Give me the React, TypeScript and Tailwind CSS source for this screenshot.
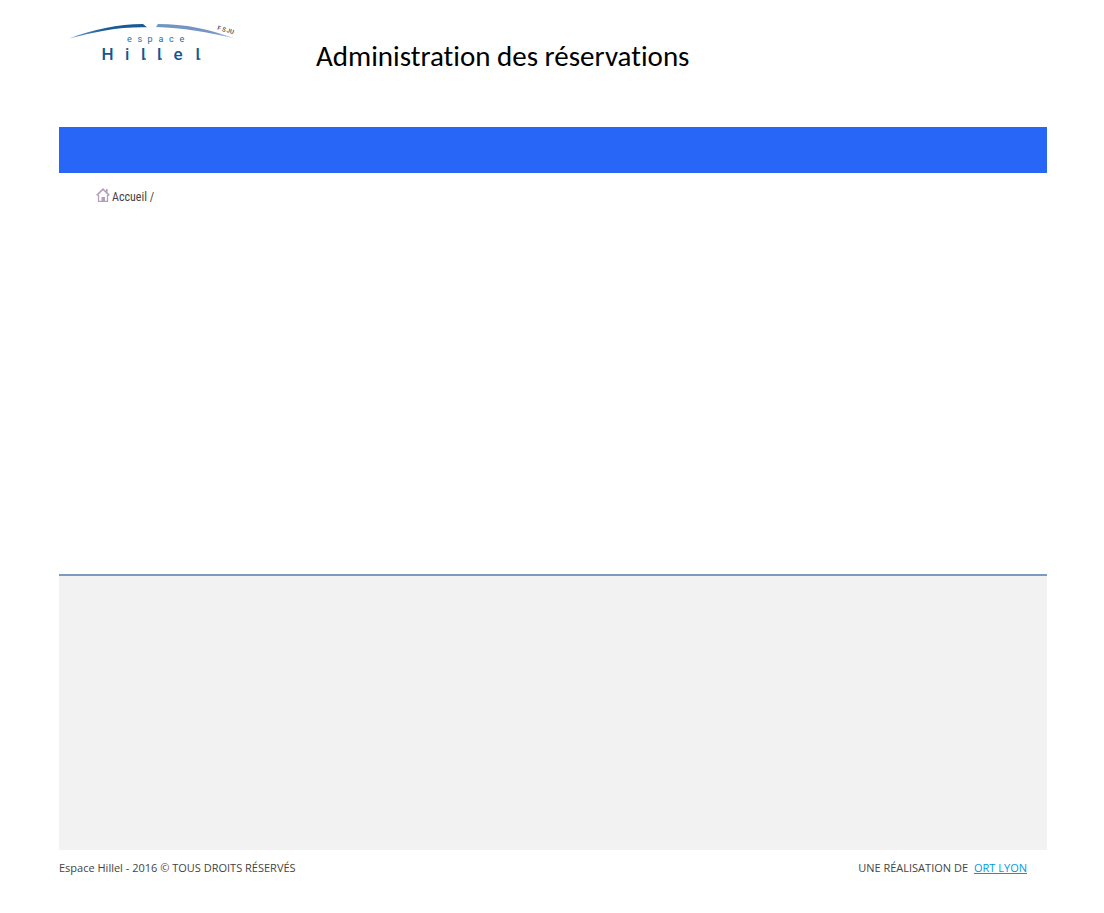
import React from "react";

function Logo() {
  return (
    <svg viewBox="0 0 180 48" className="h-12 w-[180px] shrink-0" role="img" aria-label="Espace Hillel FSJU">
      <defs>
        <linearGradient id="leftArc" x1="0" x2="1" y1="0" y2="0">
          <stop offset="0" stopColor="#5d93c4" />
          <stop offset="0.5" stopColor="#175a94" />
          <stop offset="1" stopColor="#175a94" />
        </linearGradient>
        <linearGradient id="rightArc" x1="0" x2="1" y1="0" y2="0">
          <stop offset="0" stopColor="#6f95c2" />
          <stop offset="0.7" stopColor="#7694c2" />
          <stop offset="1" stopColor="#b3c9e2" />
        </linearGradient>
      </defs>
      <path d="M10 18.5C34 9.500 59 4 84 4L88 7.200C61 6.500 36 11.500 10 18.500Z" fill="url(#leftArc)" />
      <path d="M99 4C126 4 150 9 176 18.500C149 12.500 124 7.500 97 7Z" fill="url(#rightArc)" />
      <text x="68 78.500 88.500 99.500 110 120.500" y="22" fontSize="9" fill="#2767a3" fontFamily="Roboto, sans-serif">espace</text>
      <text x="42.500 66 82 98 114.500 136.500" y="40" fontSize="17" fontWeight="500" fill="#125893" fontFamily="Roboto, sans-serif">Hillel</text>
      <path d="M84.700 37.500q0 1.800 2.300 1.700M100.700 37.500q0 1.800 2.300 1.700M139.200 37.500q0 1.800 2.300 1.700" fill="none" stroke="#125893" strokeWidth="1.300" />
      <text transform="translate(158 9.500) rotate(16)" x="0 5 9.500 13" y="0" fontSize="6" fontWeight="500" fill="#444" fontFamily="Roboto, sans-serif">FSJU</text>
    </svg>
  );
}

function HomeIcon() {
  return (
    <svg viewBox="0 0 14 14" className="mb-1 h-[14px] w-[14px]" fill="none" stroke="#b3a0be" aria-hidden="true">
      <path d="M.7 7.400 7 1.200l6.300 6.200M10.800 1v4" strokeWidth="1.600" />
      <path d="M2.500 7v6.300h9V7" strokeWidth="1.300" />
      <path d="M5.500 9h3.500v4.500h-3.500z" fill="#b3a0be" stroke="none" />
    </svg>
  );
}

export default function App() {
  return (
    <div className="bg-white pr-[57px] pl-[59px] font-['Open_Sans',sans-serif] text-[11px] text-[#444]">
      <header className="flex h-[127px] items-start pt-5">
        <Logo />
        <h1 className="ml-[77px] pt-4 font-[Carlito,Calibri,Lato,sans-serif] text-[29px] leading-10 whitespace-nowrap text-black [font-variant-ligatures:none]">
          Administration des réservations
        </h1>
      </header>
      <nav className="h-[46px] bg-[#2866f8]" aria-label="Menu principal" />
      <main className="h-[401px] pt-[14px] pl-[37px]">
        <a href="#" className="inline-flex items-center gap-[2px] font-['Roboto_Condensed',sans-serif] text-[12px] leading-5 text-[#444]">
          <HomeIcon />
          <span>Accueil /</span>
        </a>
      </main>
      <section className="h-[276px] border-t-2 border-[#7b9bbd] bg-[#f2f2f2]" />
      <footer className="flex justify-between pt-[10px] pr-5 leading-4">
        <p>Espace Hillel - 2016 © TOUS DROITS RÉSERVÉS</p>
        <p className="flex gap-[6px]">
          <span>UNE RÉALISATION DE</span>
          <a href="#" className="text-[#009be3] underline">ORT LYON</a>
        </p>
      </footer>
    </div>
  );
}
